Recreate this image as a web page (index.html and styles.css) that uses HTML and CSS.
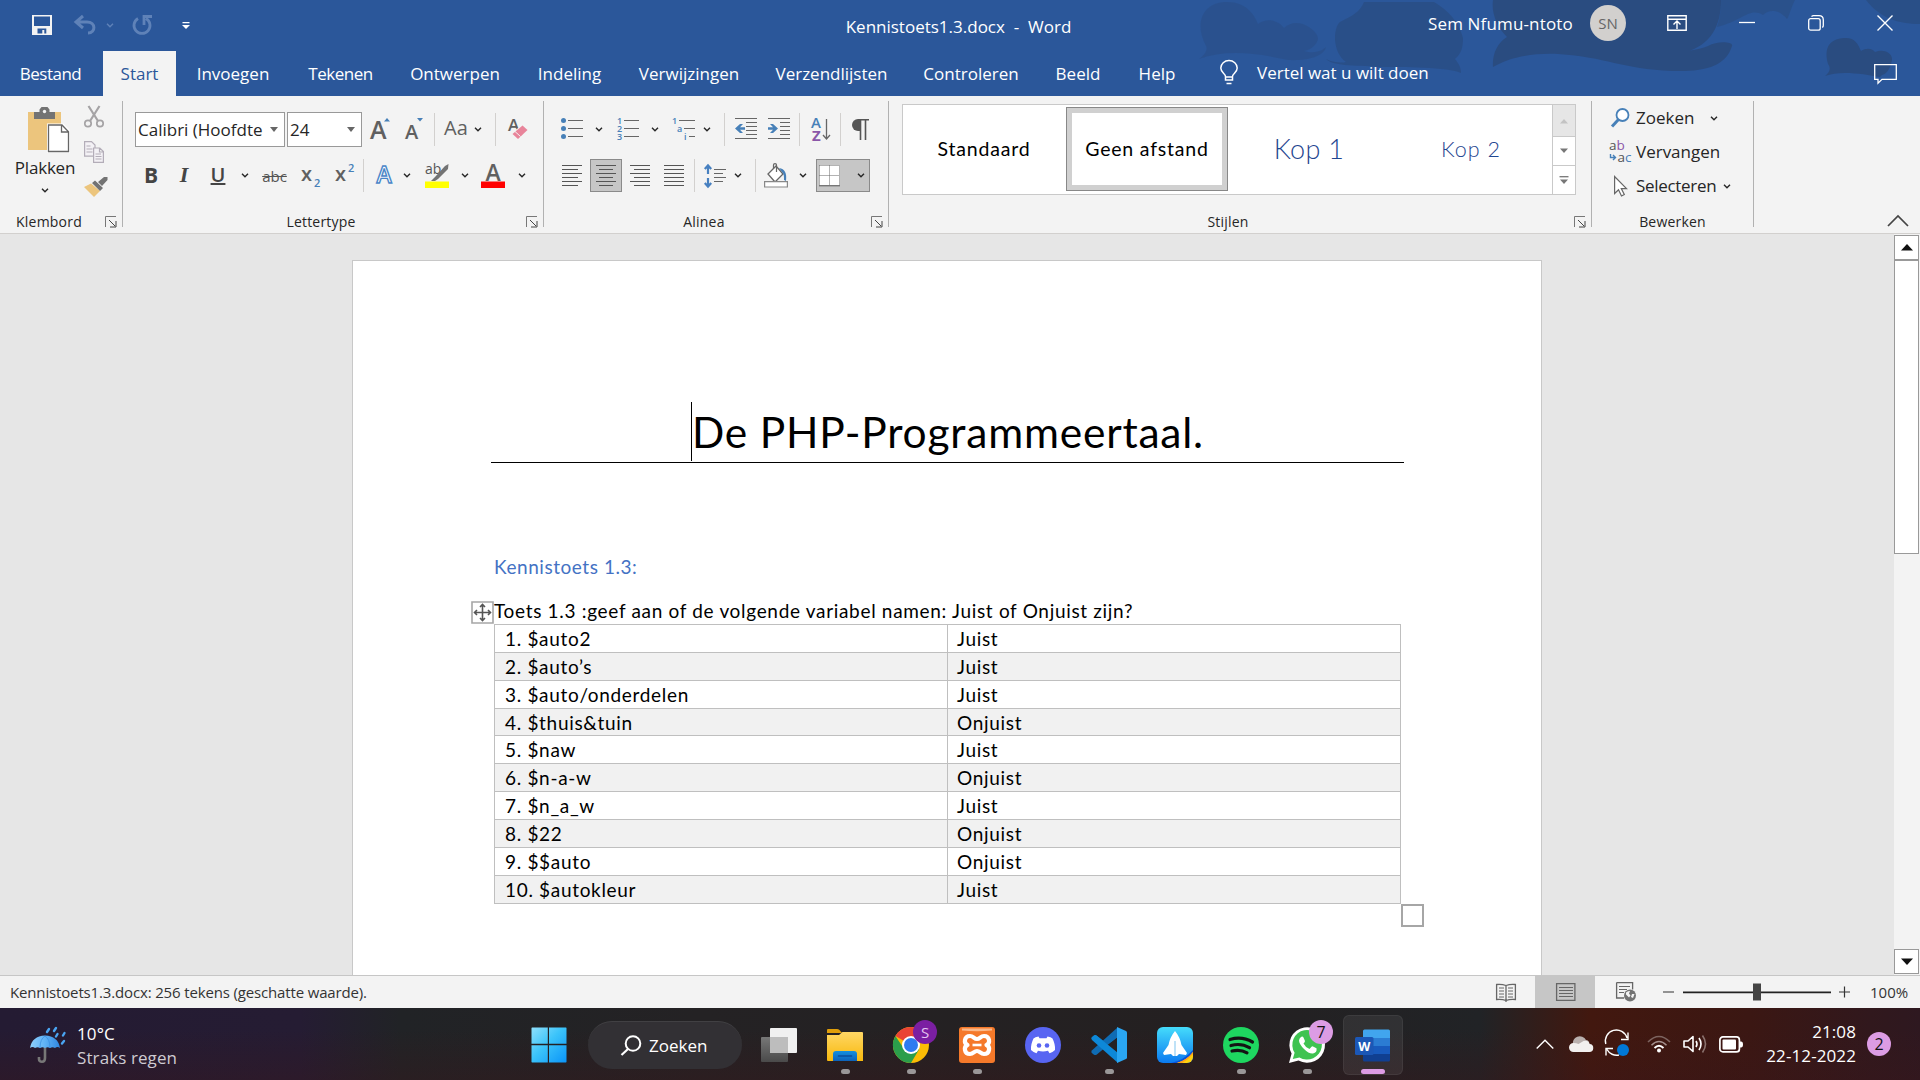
FILE: index.html
```html
<!DOCTYPE html>
<html lang="nl">
<head>
<meta charset="utf-8">
<title>Kennistoets1.3.docx - Word</title>
<link rel="stylesheet" href="styles.css">
</head>
<body>
<svg class="defs" aria-hidden="true">
  <symbol id="chev" viewBox="0 0 8 5"><path d="M1 .7l3 3 3-3" fill="none" stroke="currentColor" stroke-width="1.4"/></symbol>
  <symbol id="launch" viewBox="0 0 12 12"><path d="M.5 11V.5H11" fill="none" stroke="#777"/><path d="M4 4l6 6M11 5v6H5" fill="none" stroke="#444"/></symbol>
</svg>
<div class="app">
  <header class="head">
    <svg class="art" viewBox="0 0 740 96" width="740" height="96">
      <g fill="#2a4c80">
        <path opacity=".45" d="M19 59c6-4 9-10 7-13C14 24 22 2 47 2c20 0 28 14 31 22 10-8 22-2 26 4 12-12 32 0 34 10 0 5-6 12-14 13 10 3 18 0 22-4-2 10-20 14-38 13-36-8-64-10-89-1z"/>
        <path opacity=".7" d="M146 59c8 4 16 4 20 3-14-10-13-34-6-40 12-6 20-10 24-20h70c14 8 25 20 29 36 0 10-2 16-8 21 5 6 6 10 6 14-12-6-60-6-80-6-30-2-48-1-55-8z"/>
        <path d="M313 67c-1-12 4-24 14-30-10-10-16-24-14-37h228c0 20-6 42-32 51-14 4-26 3-35 1 22 1 42-1 54-6 10-6 26-4 24 0-6 20-26 26-60 25-50-2-66-14-114-17-30-1-50 4-65 13z"/>
        <path d="M645 76c5-4 6-8 3-12-6-22 8-26 18-26 9 0 12 6 15 13 6-4 12-2 14 1 10-4 18 2 17 8-2 10-6 14-10 15l-2 2c-16-3-40-7-55-1z"/>
        <path opacity=".55" d="M541 0h74c-5 10-6 17-8 19-8-10-18-10-24-4-14-8-20 6-46 12 3-8 4-18 4-27z"/>
        <path opacity=".75" d="M686 0h54v24c-22 0-40-6-54-24z"/>
      </g>
    </svg>
    <div class="titlebar">
      <div class="qat">
        <svg class="save" width="20" height="20" viewBox="0 0 20 20"><path d="M0 0h20v20H0z" fill="#f3f3f3"/><path d="M2 1.5h16V11H2zM5.5 13.5h8.800V18.500h-2v-3.500h-2v3.500H5.500z" fill="#2b579a"/></svg>
        <svg class="undo" width="22" height="20" viewBox="0 0 22 20"><path d="M9 1L2 7l7 6M2.500 7H13c9 0 9 11 1 11" fill="none" stroke="#5f82b8" stroke-width="3"/></svg>
        <svg class="undo-chev" width="8" height="5"><use href="#chev"/></svg>
        <svg class="redo" width="20" height="20" viewBox="0 0 20 20"><path d="M6 3.500a8 8 0 1 0 8 0M12 10V1.500H20" fill="none" stroke="#5f82b8" stroke-width="2.800"/></svg>
        <svg class="more" width="8" height="7" viewBox="0 0 8 7"><path d="M.5 0h7v1.300h-7zM0 3h8L4 7z" fill="#fff"/></svg>
      </div>
      <div class="doc-name">Kennistoets1.3.docx&nbsp; -&nbsp; Word</div>
      <div class="win">
        <span class="user">Sem Nfumu-ntoto</span>
        <span class="avatar">SN</span>
        <svg class="w1" width="20" height="16" viewBox="0 0 20 16"><path d="M.8.8h18.400v14.400H.8zM.8 4.200h18.400M10 14V6.500M6.500 9.500L10 6l3.500 3.500" fill="none" stroke="#fff" stroke-width="1.400"/></svg>
        <svg class="w2" width="16" height="16" viewBox="0 0 16 16"><path d="M0 7.500h16" stroke="#fff" stroke-width="1.300"/></svg>
        <svg class="w3" width="16" height="16" viewBox="0 0 16 16"><rect x=".7" y="3.700" width="11.500" height="11.500" rx="2" fill="none" stroke="#fff" stroke-width="1.300"/><path d="M3.500 1.500q1-.8 2-.8h5.500q4.300 0 4.300 4.300v5.500q0 1.200-1 2" fill="none" stroke="#fff" stroke-width="1.300"/></svg>
        <svg class="w4" width="16" height="16" viewBox="0 0 16 16"><path d="M.5.5l15 15M15.500.5l-15 15" stroke="#fff" stroke-width="1.400"/></svg>
      </div>
    </div>
    <nav class="tabs">
      <span class="tab tight">Bestand</span>
      <span class="tab on">Start</span>
      <span class="tab">Invoegen</span>
      <span class="tab tight">Tekenen</span>
      <span class="tab">Ontwerpen</span>
      <span class="tab">Indeling</span>
      <span class="tab">Verwijzingen</span>
      <span class="tab">Verzendlijsten</span>
      <span class="tab">Controleren</span>
      <span class="tab">Beeld</span>
      <span class="tab">Help</span>
      <span class="tell"><svg width="18" height="25" viewBox="0 0 18 25"><path d="M5.500 16.500c0-3-4.700-4-4.700-8.500a8.200 7.500 0 0 1 16.400 0c0 4.500-4.700 5.500-4.700 8.500v3.500h-7zM5.500 17h7M6.500 23.500h5" fill="none" stroke="#fff" stroke-width="1.500"/></svg><span>Vertel wat u wilt doen</span></span>
      <svg class="comment" width="23" height="20" viewBox="0 0 23 20"><path d="M.7.7h21.600v14.600H8l-4 4v-4H.7z" fill="none" stroke="#fff" stroke-width="1.300"/></svg>
    </nav>
  </header>

  <section class="ribbon">
    <div class="group klembord">
      <div class="clip">
        <div class="paste">
          <svg width="42" height="46" viewBox="0 0 42 46"><path d="M0 5h33v38H0z" fill="#ecc57d"/><path d="M6 5h5.500V2.500L13.500 0h6l2 2.500V5H27v7H6z" fill="#737373"/><circle cx="16.500" cy="4.500" r="1.700" fill="#f3f3f3"/><path d="M19 16.500h16.500l6.500 7V46H19z" fill="#fff"/><path d="M20.500 18h13.500l6.500 6.800V44.500h-20zM33.500 18v7h7" fill="#fff" stroke="#666" stroke-width="1.300"/></svg>
          <span>Plakken</span>
          <svg width="8" height="5"><use href="#chev"/></svg>
        </div>
        <div class="clip-side">
          <svg width="20" height="22" viewBox="0 0 20 22"><path d="M4.500 0l9.500 15M15.500 0L6 15" stroke="#a5a3a5" stroke-width="2.200"/><circle cx="4" cy="17.500" r="3.200" fill="none" stroke="#a5a3a5" stroke-width="1.700"/><circle cx="16" cy="17.500" r="3.200" fill="none" stroke="#a5a3a5" stroke-width="1.700"/></svg>
          <svg width="20" height="22" viewBox="0 0 20 22"><path d="M.6.6h6.900l3.500 3.500v11H.6zM2.500 5h4M2.500 8h6M2.500 11h6" fill="#f3f1f5" stroke="#b3adb8" stroke-width="1.200"/><path d="M9.600 7h6.200l3.600 3.600v10.800H9.600zM15.500 7v4h4M11.500 13h5.500M11.500 15.500h6M11.500 18h6" fill="#f3f1f5" stroke="#b3adb8" stroke-width="1.200"/></svg>
          <svg class="brush" width="24" height="20" viewBox="0 0 24 20"><path d="M0 10l7-3.500L16 14l-6 6z" fill="#ecc57d"/><path d="M8 6l3-2.500 8 7.500-3 3zM14 5l6-5h3.500v3L18 9z" fill="#737373"/></svg>
        </div>
      </div>
      <div class="foot"><span class="lbl">Klembord</span><svg class="la" width="12" height="12"><use href="#launch"/></svg></div>
    </div>
    <i class="div"></i>

    <div class="group lettertype">
      <div class="row r1">
        <div class="combo cf"><span>Calibri (Hoofdte</span><i class="tri"></i></div>
        <div class="combo cs"><span>24</span><i class="tri"></i></div>
        <div class="b" style="width:38px"><svg width="22" height="24" viewBox="0 0 22 24"><text x="0" y="21.500" class="gl" font-size="25">A</text><path d="M14 4.500h6L17 1z" fill="#4780b8"/></svg></div>
        <div class="b" style="width:28px"><svg width="20" height="24" viewBox="0 0 20 24"><text x="1" y="21.500" class="gl" font-size="20">A</text><path d="M13 1h6l-3 3.500z" fill="#4780b8"/></svg></div>
        <i class="sep" style="width:13px"></i>
        <div class="b" style="width:30px"><span class="aa">Aa</span></div>
        <div class="b" style="width:14px"><svg width="8" height="5"><use href="#chev"/></svg></div>
        <i class="sep" style="width:20px"></i>
        <div class="b" style="width:25px"><svg width="20" height="24" viewBox="0 0 20 24"><text x="0" y="14" class="gl" font-size="17">A</text><path d="M3 16.500L14 8l6 5-11 10-6-4z" fill="#f3f3f3"/><path d="M4.500 17L14.500 8.500 19.500 13 10 22z" fill="#e8849a"/><path d="M7 14.500l5.500 5" stroke="#f3f3f3"/></svg></div>
      </div>
      <div class="row r2">
        <div class="b gb" style="width:26px">B</div>
        <div class="b gi" style="width:40px">I</div>
        <div class="b gu" style="width:28px">U</div>
        <div class="b" style="width:26px"><svg width="8" height="5"><use href="#chev"/></svg></div>
        <div class="b" style="width:33px"><span class="strike">abc</span></div>
        <div class="b" style="width:40px"><svg width="20" height="26" viewBox="0 0 20 26"><text x="0" y="18" class="gl" font-size="20">x</text><text x="13" y="24" class="blue" font-size="11">2</text></svg></div>
        <div class="b" style="width:28px"><svg width="20" height="26" viewBox="0 0 20 26"><text x="0" y="18" class="gl" font-size="20">x</text><text x="13" y="9" class="blue" font-size="11">2</text></svg></div>
        <i class="sep" style="width:8px"></i>
        <div class="b" style="width:33px"><svg width="20" height="24" viewBox="0 0 20 24"><text x="10" y="19" text-anchor="middle" class="fx" font-size="23">A</text></svg></div>
        <div class="b" style="width:14px"><svg width="8" height="5"><use href="#chev"/></svg></div>
        <div class="b" style="width:46px"><svg width="24" height="25" viewBox="0 0 24 25"><text x="0" y="11" class="gn" font-size="14">ab</text><path d="M6 18l4-4L20 3l3.500-2-.5 5-10 10-3 2z" fill="#737373"/><path d="M0 18.500h24v6.500H0z" fill="#ff0"/></svg></div>
        <div class="b" style="width:10px"><svg width="8" height="5"><use href="#chev"/></svg></div>
        <div class="b" style="width:46px"><svg width="24" height="25" viewBox="0 0 24 25"><text x="12" y="18" text-anchor="middle" class="gl" font-size="23">A</text><path d="M0 18.500h24v6.500H0z" fill="#f00"/></svg></div>
        <div class="b" style="width:11px"><svg width="8" height="5"><use href="#chev"/></svg></div>
      </div>
      <div class="foot"><span class="lbl">Lettertype</span><svg class="la" width="12" height="12"><use href="#launch"/></svg></div>
    </div>
    <i class="div"></i>

    <div class="group alinea">
      <div class="row r1">
        <div class="b" style="width:27px"><svg width="22" height="22" viewBox="0 0 22 22"><g fill="#4780b8"><circle cx="2.500" cy="2.500" r="2.500"/><circle cx="2.500" cy="10.500" r="2.500"/><circle cx="2.500" cy="18.500" r="2.500"/></g><path d="M7 2.500h15M7 10.500h15M7 18.500h15" stroke="#666"/></svg></div>
        <div class="b" style="width:28px"><svg width="8" height="5"><use href="#chev"/></svg></div>
        <div class="b" style="width:30px"><svg width="22" height="24" viewBox="0 0 22 24"><g class="blue" font-size="9"><text x="0" y="7">1</text><text x="0" y="15">2</text><text x="0" y="23">3</text></g><path d="M7 3.500h15M7 11.500h15M7 19.500h15" stroke="#666"/></svg></div>
        <div class="b" style="width:24px"><svg width="8" height="5"><use href="#chev"/></svg></div>
        <div class="b" style="width:33px"><svg width="23" height="24" viewBox="0 0 23 24"><g class="blue" font-size="9"><text x="0" y="7">1</text><text x="5" y="15">a</text><text x="12" y="23">i</text></g><path d="M7 3.500h16M12 11.500h11M17 19.500h6" stroke="#666"/></svg></div>
        <div class="b" style="width:14px"><svg width="8" height="5"><use href="#chev"/></svg></div>
        <i class="sep" style="width:20px"></i>
        <div class="b" style="width:23px"><svg width="22" height="22" viewBox="0 0 22 22"><path d="M0 .5h22M11 4.500h11M11 8.500h11M11 12.500h11M11 16.500h11M0 20.500h22" stroke="#666"/><path d="M0 10.500L5 6h3L5 9.300h5v2.500H5L8 15H5z" fill="#4780b8"/></svg></div>
        <div class="b indent" style="width:24px"><svg width="22" height="22" viewBox="0 0 22 22"><path d="M0 .5h22M12 4.500h10M12 8.500h10M12 12.500h10M12 16.500h10M0 20.500h22" stroke="#666"/><path d="M10 10.500L5 6H2l3 3.300H0v2.500h5L2 15h3z" fill="#4780b8"/></svg></div>
        <i class="sep" style="width:17px"></i>
        <div class="b" style="width:25px"><svg width="20" height="26" viewBox="0 0 20 26"><text x="0" y="12" class="blue" font-weight="700" font-size="15">A</text><text x="1" y="25" fill="#8a56a8" font-weight="700" font-size="15">Z</text><path d="M15.500 3v20M12 19l3.500 4 3.500-4" fill="none" stroke="#666" stroke-width="1.300"/></svg></div>
        <i class="sep" style="width:14px"></i>
        <div class="b" style="width:26px"><svg width="17" height="21" viewBox="0 0 17 21"><path d="M17 .7H7.500M8.500 1v20M13.500 1v20" fill="none" stroke="#555" stroke-width="1.600"/><path d="M9 0H6a6 6 0 0 0 0 12h3z" fill="#555"/></svg></div>
      </div>
      <div class="row r2">
        <div class="b" style="width:28px"><svg width="20" height="22" viewBox="0 0 20 22"><path d="M0 .5h20M0 4.500h16M0 8.500h20M0 12.500h16M0 16.500h20M0 20.500h16" stroke="#555"/></svg></div>
        <div class="b sel al" style="width:32px"><svg width="20" height="22" viewBox="0 0 20 22"><path d="M0 .5h20M3 4.500h14M0 8.500h20M3 12.500h14M0 16.500h20M3 20.500h14" stroke="#555"/></svg></div>
        <div class="b" style="width:36px"><svg width="20" height="22" viewBox="0 0 20 22"><path d="M0 .5h20M4 4.500h16M0 8.500h20M4 12.500h16M0 16.500h20M4 20.500h16" stroke="#555"/></svg></div>
        <div class="b" style="width:32px"><svg width="20" height="22" viewBox="0 0 20 22"><path d="M0 .5h20M0 4.500h20M0 8.500h20M0 12.500h20M0 16.500h20M0 20.500h20" stroke="#555"/></svg></div>
        <i class="sep" style="width:8px"></i>
        <div class="b" style="width:34px"><svg width="22" height="24" viewBox="0 0 22 24"><path d="M4 2v8M4 14v8M.8 5L4 1.500 7.200 5M.8 19L4 22.500 7.200 19" fill="none" stroke="#4780c0" stroke-width="2.200"/><path d="M10 5.500h12M10 9.500h9M10 13.500h12M10 17.500h9" stroke="#666"/></svg></div>
        <div class="b" style="width:12px"><svg width="8" height="5"><use href="#chev"/></svg></div>
        <i class="sep" style="width:22px"></i>
        <div class="b" style="width:20px"><svg width="24" height="25" viewBox="0 0 24 25"><path d="M4 11l8-8 7 8-8 8z" fill="#fff" stroke="#666" stroke-width="1.300"/><path d="M9.500 6V2q0-1.400 1.500-1.400T12.500 2v7" fill="none" stroke="#666" stroke-width="1.200"/><path d="M15 5c6 1 8 5 7 13l-2-1c0-4 0-6-2-8z" fill="#4780b8"/><path d="M.6 18.600h22.800v5.400H.6z" fill="#fff" stroke="#888" stroke-width="1.200"/></svg></div>
        <div class="b bucket-chev" style="width:30px"><svg width="8" height="5"><use href="#chev"/></svg></div>
        <div class="b sel bord"><svg width="21" height="22" viewBox="0 0 21 22"><path d="M0 0h21v21H0z" fill="#fff"/><path d="M.5.5h20M.5.5v20M20.500.5v20M10.500.5v20M.5 10.500h20" fill="none" stroke="#666" stroke-dasharray="1 1"/><path d="M0 20.700h21" stroke="#777" stroke-width="1.400"/></svg><svg width="8" height="5"><use href="#chev"/></svg></div>
      </div>
      <div class="foot"><span class="lbl">Alinea</span><svg class="la" width="12" height="12"><use href="#launch"/></svg></div>
    </div>
    <i class="div"></i>

    <div class="group stijlen">
      <div class="gallery">
        <div class="style">Standaard</div>
        <div class="style cur">Geen afstand</div>
        <div class="style k1">Kop 1</div>
        <div class="style k2">Kop 2</div>
        <div class="gscroll"><i class="off"><svg width="10" height="6" viewBox="0 0 10 6"><path d="M1 5.500h8L5 1z" fill="#c3c3c3"/></svg></i><i><svg width="10" height="6" viewBox="0 0 10 6"><path d="M1 .5h8L5 5z" fill="#777"/></svg></i><i><svg width="10" height="9" viewBox="0 0 10 9"><path d="M.5.7h9" stroke="#777" stroke-width="1.300"/><path d="M1 3.500h8L5 8z" fill="#777"/></svg></i></div>
      </div>
      <div class="foot"><span class="lbl">Stijlen</span><svg class="la" width="12" height="12"><use href="#launch"/></svg></div>
    </div>
    <i class="div"></i>

    <div class="group bewerken">
      <div class="edit"><svg width="25" height="20" viewBox="0 0 25 20"><circle cx="13.500" cy="7" r="6" fill="#fff" stroke="#4780b8" stroke-width="1.800"/><path d="M9.500 11.500L3 18.500" stroke="#4780b8" stroke-width="3"/></svg><span class="t">Zoeken</span><svg class="ec1" width="8" height="5"><use href="#chev"/></svg></div>
      <div class="edit"><svg width="25" height="24" viewBox="0 0 25 24"><text x="0" y="10" class="gn" font-size="13.500">a<tspan fill="#8a56a8">b</tspan></text><text x="8.500" y="21.500" class="gn" font-size="13.500">a<tspan fill="#4780b8">c</tspan></text><path d="M1.500 14v3.500H6M4 15l2.500 2.500L4 20" fill="none" stroke="#4780b8" stroke-width="1.400"/></svg><span class="t">Vervangen</span></div>
      <div class="edit"><svg width="25" height="22" viewBox="0 0 25 22"><path d="M5.600 1.500v17l3.900-3.700 3 6.200 2.800-1.400-3-6h5.200z" fill="#fff" stroke="#666" stroke-width="1.200"/></svg><span class="t narrow">Selecteren</span><svg class="ec2" width="8" height="5"><use href="#chev"/></svg></div>
      <div class="foot"><span class="lbl">Bewerken</span></div>
    </div>
    <i class="div"></i>
    <svg class="collapse" width="22" height="12" viewBox="0 0 22 12"><path d="M1 11L11 1l10 10" fill="none" stroke="#444" stroke-width="1.700"/></svg>
  </section>

  <main class="work">
    <article class="page">
      <h1><span>De PHP-Programmeertaal.</span></h1>
      <h2>Kennistoets 1.3:</h2>
      <div class="q"><svg class="move" width="23" height="23" viewBox="0 0 23 23"><path d="M1 1h21v21H1z" fill="#fff" stroke="#a6a6a6" stroke-width="1.600"/><path d="M11.500 4v15M4 11.500h15M9 6l2.500-2.500L14 6M9 17l2.500 2.500L14 17M6 9l-2.500 2.500L6 14M17 9l2.500 2.500L17 14" fill="none" stroke="#555" stroke-width="1.600"/></svg>Toets 1.3 :geef aan of de volgende variabel namen: Juist of Onjuist zijn?</div>
      <div class="answers">
        <div class="tr"><span>1. $auto2</span><span>Juist</span></div>
        <div class="tr"><span>2. $auto’s</span><span>Juist</span></div>
        <div class="tr"><span>3. $auto/onderdelen</span><span>Juist</span></div>
        <div class="tr short"><span>4. $thuis&amp;tuin</span><span>Onjuist</span></div>
        <div class="tr"><span>5. $naw</span><span>Juist</span></div>
        <div class="tr"><span>6. $n-a-w</span><span>Onjuist</span></div>
        <div class="tr"><span>7. $n_a_w</span><span>Juist</span></div>
        <div class="tr"><span>8. $22</span><span>Onjuist</span></div>
        <div class="tr"><span>9. $$auto</span><span>Onjuist</span></div>
        <div class="tr"><span>10. $autokleur</span><span>Juist</span></div>
        <i class="grip"></i>
      </div>
    </article>
    <div class="scroll">
      <i class="sb"><svg width="12" height="7" viewBox="0 0 12 7"><path d="M0 6.500h12L6 0z" fill="#111"/></svg></i>
      <i class="thumb"></i>
      <i class="sb end"><svg width="12" height="7" viewBox="0 0 12 7"><path d="M0 .5h12L6 7z" fill="#111"/></svg></i>
    </div>
  </main>

  <footer class="status">
    <span class="count-text">Kennistoets1.3.docx: 256 tekens (geschatte waarde).</span>
    <div class="views">
      <i class="v"><svg width="20" height="19" viewBox="0 0 20 19"><path d="M10 2.500Q6 1 .6 1.500v15Q6 16 10 17.500q4-1.500 9.400-1v-15Q14 1 10 2.500V19" fill="none" stroke="#666" stroke-width="1.300"/><path d="M3 5h5M3 8h5M3 11h5M3 14h5M12 5h5M12 8h5M12 11h5M12 14h5" stroke="#666"/></svg></i>
      <i class="v on"><svg width="20" height="18" viewBox="0 0 20 18"><path d="M.6.600h18.300v16.800H.6z" fill="none" stroke="#666" stroke-width="1.300"/><path d="M3 4.500h14M3 7.500h14M3 10.500h14M3 13.500h14" stroke="#666"/></svg></i>
      <i class="v"><svg width="20" height="20" viewBox="0 0 20 20"><path d="M.6.600h16v7M.6.600v15.400H8" fill="none" stroke="#666" stroke-width="1.300"/><path d="M3 4.500h11M3 7.500h8M3 10.500h5" stroke="#666"/><circle cx="14" cy="13.500" r="6" fill="#737373"/><path d="M10 10.500q2-2 4-1.500l-1 2.500 1.500 2-1.500 2-3-3zM16 12l2.500 0-1.500 4-2-1z" fill="#f3f3f3"/></svg></i>
    </div>
    <svg class="zoom" width="190" height="18" viewBox="0 0 190 18"><path d="M1 9h11M177 9h11M182.500 3.500v11" stroke="#333" stroke-width="1.200"/><path d="M21 9.300h148" stroke="#222" stroke-width="1.700"/><path d="M91 .5h8v17h-8z" fill="#444"/></svg>
    <span class="pct">100%</span>
  </footer>

  <div class="taskbar">
    <div class="weather">
      <svg width="36" height="38" viewBox="0 0 36 38"><defs><linearGradient id="um" x1="0" x2="1"><stop offset="0" stop-color="#8fd0fb"/><stop offset=".5" stop-color="#5fb2f5"/><stop offset="1" stop-color="#2f86e0"/></linearGradient></defs><path d="M15 21v11q0 3.800-3 3.800T9 33v-2" fill="none" stroke="#777" stroke-width="2.600"/><path d="M0 22Q2 10 15 9.500 28 10 30 22q-2.500-1.800-5 0-2.500-1.500-5 0-2.500-1.500-5 0-2.500-1.500-5 0-2.500-1.500-5 0-2.500-1.800-5 0z" fill="url(#um)"/><path d="M10 22q0-9 5-12 5 3 5 12" fill="none" stroke="#3a8fe0" stroke-width=".8"/><path d="M17 6l2-3M24 5l2-3M26 10.500l1.500-2.500M33 9.500l1.500-2.500M32 17.500l2-2.500" stroke="#4aa5f2" stroke-width="2.400" stroke-linecap="round"/></svg>
      <div class="wt"><span>10°C</span><span class="dim">Straks regen</span></div>
    </div>
    <div class="dock">
      <div class="slot start"><svg width="36" height="36" viewBox="0 0 36 36"><defs><linearGradient id="wi" x1="0" y1="0" x2="1" y2="1"><stop offset="0" stop-color="#8fe0fc"/><stop offset=".45" stop-color="#3cc4fa"/><stop offset="1" stop-color="#0a94f8"/></linearGradient></defs><path d="M1 .5h15.800v16.300H.5V1zM18 .5h17l.5.500v15.800H18zM.5 18.200h16.300v17.300H1l-.5-.500zM18 18.200h17.500V35l-.5.500H18z" fill="url(#wi)"/></svg></div>
      <div class="search"><svg width="22" height="22" viewBox="0 0 22 22"><circle cx="13" cy="8.500" r="7.300" fill="none" stroke="#fff" stroke-width="2"/><path d="M8 14l-6.500 6" stroke="#fff" stroke-width="2.200"/></svg><span>Zoeken</span></div>
      <div class="slot"><svg width="36" height="36" viewBox="0 0 36 36"><defs><linearGradient id="tv" x1="0" y1="0" x2="0" y2="1"><stop offset="0" stop-color="#777"/><stop offset="1" stop-color="#4a4a4a"/></linearGradient></defs><rect x="0" y="10" width="27" height="25" rx="1" fill="url(#tv)"/><rect x="9" y="1" width="27" height="25" rx="1" fill="#f0f0f0"/><path d="M9 10h18v16H9z" fill="#bdbdbd"/></svg></div>
      <div class="slot run"><svg width="36" height="36" viewBox="0 0 36 36"><defs><linearGradient id="fo" x1="0" y1="0" x2="0" y2="1"><stop offset="0" stop-color="#ffd765"/><stop offset="1" stop-color="#f8b90d"/></linearGradient><linearGradient id="fb" x1="0" y1="0" x2="0" y2="1"><stop offset="0" stop-color="#1490df"/><stop offset="1" stop-color="#0d62ba"/></linearGradient></defs><path d="M0 3q0-1 1-1h9q1.500 0 2.500 1L15 6H0z" fill="#e09e0a"/><path d="M0 8h12l3.500-3H35q1 0 1 1v28H1q-1 0-1-1z" fill="url(#fo)"/><path d="M6 34V27q0-3 3-3h18q3 0 3 3v7z" fill="url(#fb)"/><path d="M11.500 29h13" stroke="#0b4f9c" stroke-width="1.600" stroke-linecap="round"/></svg></div>
      <div class="slot run"><svg width="36" height="36" viewBox="0 0 36 36"><circle cx="18" cy="18" r="18" fill="#fbbc05"/><path d="M18 18L2.400 9A18 18 0 0 1 33.600 9L34 10H18z" fill="#ea4335"/><path d="M18 18l-6.900 4L2.400 9A18 18 0 0 0 18 36l8-13.500z" fill="#2b9e4b"/><circle cx="18" cy="18" r="9" fill="#fff"/><circle cx="18" cy="18" r="7" fill="#2f7bf0"/></svg><span class="badge ps">S</span></div>
      <div class="slot run"><svg width="36" height="36" viewBox="0 0 36 36"><rect width="36" height="36" rx="3" fill="#f5792a"/><path d="M3 1.500h30v2q-15 1.500-30 0z" fill="#fbb98a"/><path d="M11 9c3.500 0 4 3 7 3s3.500-3 7-3c6 0 6.500 7.500 2.500 9 4 1.500 3.500 9-2.500 9-3.500 0-4-3-7-3s-3.500 3-7 3c-6 0-6.500-7.500-2.500-9C4.500 16.500 5 9 11 9z" fill="none" stroke="#fff" stroke-width="4.200" stroke-linejoin="round"/><path d="M13.500 18h9" stroke="#fff" stroke-width="2.600"/></svg></div>
      <div class="slot"><svg width="36" height="36" viewBox="0 0 36 36"><circle cx="18" cy="18" r="18" fill="#5865f2"/><path d="M13.500 9.500l1 1.700h7l1-1.700q3.500.5 5 2 3 6 2.500 11.500-2.500 2.500-5.500 3.200l-1.500-2.400q-5 1.600-10 0l-1.500 2.400Q8.500 25.500 6 23q-.5-5.500 2.500-11.500 1.500-1.500 5-2z" fill="#fff"/><circle cx="14" cy="18.500" r="2.300" fill="#5865f2"/><circle cx="22" cy="18.500" r="2.300" fill="#5865f2"/></svg></div>
      <div class="slot run"><svg width="36" height="36" viewBox="0 0 36 36"><path d="M26 9.500v17L1 12.500q-1-1.500 0-2.500l2-1.500q1.300-.8 2.500 0L27 25.500z" fill="#0a7fce"/><path d="M26 1L.8 23.500q-1 1.500 0 2.500L3 27.700q1.300.7 2.500 0L27 10z" fill="#0f6cb4"/><path d="M26 11v15L16.500 18z" fill="#242124"/><path d="M.8 10.500L3 8.500q1.300-.8 2.500 0L27 26v10L1 13q-1-1.500-.2-2.500z" fill="#0d88d8"/><path d="M26 0l9 4q1 .5 1 1.500v25q0 1-1 1.500l-9 4z" fill="#2aa6f2"/></svg></div>
      <div class="slot"><svg width="36" height="36" viewBox="0 0 36 36"><defs><linearGradient id="sp" x1="0" y1="0" x2="0" y2="1"><stop offset="0" stop-color="#45dcfb"/><stop offset="1" stop-color="#0b7af0"/></linearGradient><clipPath id="spc"><rect width="36" height="36" rx="6"/></clipPath></defs><g clip-path="url(#spc)"><path d="M0 0h36v36H0z" fill="url(#sp)"/><path d="M14 36q12-2 22-13v13z" fill="#0a50d8"/><path d="M20 36q10-3 16-11v11z" fill="#ffd20c"/><path d="M20 36q10-3 16-11v2q-5 6-11 9z" fill="#ff9d1e"/></g><path d="M18 4q-5 6-6.500 14L6 26l1 2 7-1 2 2h4l2-2 7 1 1-2-5.500-8Q23 10 18 4z" fill="#fff"/><path d="M17 14h2v15h-2z" fill="#bfe2f7"/></svg></div>
      <div class="slot run"><svg width="36" height="36" viewBox="0 0 36 36"><circle cx="18" cy="18" r="18" fill="#1ed760"/><path d="M7 12.500q12-3.500 22.500 2.500M8 18.500q10-2.800 18.500 2.200M9 24q8.500-2 15 1.800" fill="none" stroke="#141414" stroke-width="3.200" stroke-linecap="round"/></svg></div>
      <div class="slot run"><svg width="36" height="36" viewBox="0 0 36 36"><path d="M0 36l2.600-9.400A17.800 17.800 0 1 1 9.500 33.500z" fill="#fff"/><path d="M3.800 32l1.800-6.300a14.800 14.800 0 1 1 4.800 4.700z" fill="#3fc351"/><path d="M12 10q1.500-1 2.500.5l1.500 3.500q0 1-1.500 2.500 2 4 6 5.500l2-2.300q.8-.6 1.500-.2l3.500 1.800q.8 4.200-3.500 5.200-4 .5-9-4.500T10 13.500q.3-2.500 2-3.500z" fill="#fff"/></svg><span class="badge">7</span></div>
      <div class="slot word"><svg width="36" height="36" viewBox="0 0 36 36"><path d="M8 4q0-1.500 1.500-1.500h24Q35 2.500 35 4v7H8z" fill="#41a5ee"/><path d="M8 11h27v8H8z" fill="#2b7cd3"/><path d="M8 19h27v8H8z" fill="#185abd"/><path d="M8 27h27v6q0 1.500-1.500 1.500h-24Q8 34.500 8 33z" fill="#103f91"/><rect x="0" y="10" width="18.500" height="18" rx="1.500" fill="#1b57b6"/><text x="9.200" y="23.500" text-anchor="middle" fill="#fff" font-weight="700" font-size="12.500">W</text></svg></div>
    </div>
    <div class="tray">
      <svg class="t1" width="18" height="10" viewBox="0 0 18 10"><path d="M.7 9.500L9 1.200l8.300 8.300" fill="none" stroke="#fff" stroke-width="1.400"/></svg>
      <svg class="t2" width="24" height="16" viewBox="0 0 24 16"><path d="M4 9a7 7 0 0 1 13-5q3 0 3.500 4z" fill="#b9b0ae"/><path d="M4.500 16a4.500 4.500 0 0 1 0-9q3 0 5 1l5-3q5-1 6 3a4 4 0 0 1-.5 8z" fill="#f2f0ef"/></svg>
      <svg class="t3" width="24" height="24" viewBox="0 0 24 24"><path d="M.8 12A11 11 0 0 1 22 6M23 .5v7h-7M14 23A11 11 0 0 1 2 17.500M1 23.500v-7h7" fill="none" stroke="#fff" stroke-width="1.400"/><circle cx="18" cy="18" r="6" fill="#0078d7"/></svg>
      <svg class="t4" width="24" height="18" viewBox="0 0 24 18"><path d="M1 7q11-11 22 0" fill="none" stroke="#7d6460" stroke-width="1.600"/><path d="M4.500 10.200q7.500-7.500 15 0" fill="none" stroke="#a48f8c" stroke-width="1.500"/><path d="M7.500 13q4.500-4.500 9 0" fill="none" stroke="#fff" stroke-width="1.900"/><circle cx="12" cy="15.500" r="2" fill="#fff"/></svg>
      <svg class="t5" width="24" height="20" viewBox="0 0 24 20"><path d="M1 7v6h4l5 4.500v-15L5 7z" fill="none" stroke="#fff" stroke-width="1.600" stroke-linejoin="round"/><path d="M13 7q2 3 0 6M16 4q4 6 0 12" fill="none" stroke="#fff" stroke-width="1.600"/><path d="M19.500 1.500q6 8.500 0 17" fill="none" stroke="#8a716d" stroke-width="1.600"/></svg>
      <svg class="t6" width="24" height="17" viewBox="0 0 24 17"><rect x=".9" y=".9" width="19.500" height="15" rx="3" fill="none" stroke="#fff" stroke-width="1.700"/><rect x="3.500" y="3.500" width="13.500" height="10" rx="1" fill="#fff"/><path d="M21 5.500h1q2 0 2 3t-2 3h-1z" fill="#fff"/></svg>
      <div class="clock"><span>21:08</span><span>22-12-2022</span></div>
      <span class="count">2</span>
    </div>
  </div>
</div>
</body>
</html>
```
FILE: styles.css
```css
* { box-sizing: border-box; }
html, body { margin: 0; width: 1920px; height: 1080px; overflow: hidden; }
body { font-family: "Open Sans", "Noto Sans", sans-serif; color: #262626; }
svg { display: block; flex: none; overflow: visible; }
i { font-style: normal; }
.defs { position: absolute; width: 0; height: 0; }
.app { display: flex; flex-direction: column; width: 1920px; height: 1080px; }

/* Title bar and tabs */
.head { position: relative; height: 96px; background: #2b579a; color: #fff; display: flex; flex-direction: column; }
.art { position: absolute; right: 0; top: 0; overflow: hidden; }
.titlebar { position: relative; height: 51px; display: grid; grid-template-columns: 600px 1fr 600px; }
.qat { display: flex; align-items: center; color: #5f82b8; padding-bottom: 1px; }
.save { margin-left: 32px; }
.undo { margin-left: 22px; }
.undo-chev { margin-left: 10px; }
.redo { margin-left: 18px; }
.more { margin-left: 30px; }
.doc-name { display: flex; align-items: center; justify-content: center; font-size: 17px; padding: 2px 3px 0 0; }
.win { display: flex; align-items: center; padding-bottom: 5px; font-size: 17px; }
.user { margin-left: 108px; width: 162px; white-space: nowrap; letter-spacing: .15px; }
.avatar { width: 36px; height: 36px; border-radius: 50%; background: #d2d0ce; color: #666; font-size: 15px; display: flex; align-items: center; justify-content: center; }
.w1 { margin-left: 41px; }
.w2 { margin-left: 52px; }
.w3 { margin-left: 53px; }
.w4 { margin-left: 53px; }
.tabs { position: relative; height: 45px; display: grid; grid-template-columns: 103px 73px 114px 101px 128px 101px 138px 147px 132px 82px 76px 1fr 46px; font-size: 17px; }
.tab { display: flex; align-items: center; justify-content: center; white-space: nowrap; }
.tab:first-child { padding-right: 2px; }
.tight { letter-spacing: -.5px; }
.tab.on { background: #f3f3f3; color: #2b579a; }
.tell { display: flex; align-items: center; gap: 19px; padding: 0 0 2px 25px; }
.comment { align-self: center; }

/* Ribbon */
.ribbon { height: 138px; background: #f3f3f3; border-bottom: 1px solid #d2d0ce; display: flex; }
.div { width: 1px; margin: 5px 0 6px; background: #b1b1b1; }
.group { display: flex; flex-direction: column; padding-top: 16px; }
.klembord { width: 122px; padding-top: 10px; }
.lettertype { width: 420px; padding-left: 12px; }
.alinea { width: 344px; padding-left: 14px; }
.stijlen { width: 702px; padding: 8px 0 0 13px; }
.bewerken { width: 161px; padding-top: 5px; }
.foot { margin-top: auto; height: 23px; display: flex; align-items: center; font-size: 14px; }
.lbl { flex: 1; text-align: center; letter-spacing: .2px; }
.lettertype .foot { margin-left: -12px; }
.alinea .foot { margin-left: -14px; }
.stijlen .foot { margin-left: -13px; }
.la { margin: 0 5px 0 7px; }
.clip { display: flex; }
.paste { width: 84px; padding: 1px 0 0 6px; display: flex; flex-direction: column; align-items: center; font-size: 17px; }
.paste span { line-height: 30px; margin: 0 0 5px; letter-spacing: -.2px; }
.paste svg:first-child { margin-left: 8px; }
.clip-side { display: flex; flex-direction: column; gap: 13px; }
.brush { margin-top: 1px; }
.row { display: flex; align-items: center; }
.r1 { height: 35px; margin-bottom: 12px; }
.r2 { height: 33px; }
.lettertype .r2 { padding-left: 3px; }
.b { display: flex; align-items: center; justify-content: center; height: 100%; flex: none; }
.r1 .b { padding-bottom: 1px; }
.sep { height: 33px; flex: none; background: linear-gradient(#d2d0ce, #d2d0ce) center / 1px 100% no-repeat; }
.combo { height: 35px; background: #fff; border: 1px solid #999; display: flex; align-items: center; justify-content: space-between; font-size: 17px; white-space: nowrap; padding: 0 6px 0 2px; }
.cf { width: 150px; }
.cs { width: 75px; margin-left: 2px; }
.tri { border: 4px solid transparent; border-top: 5px solid #666; border-bottom: 0; }
.gl { fill: #606060; font-weight: 600; }
.gn { fill: #555; }
.blue { fill: #4780b8; font-weight: 600; }
.fx { fill: #fff; stroke: #4a86c8; stroke-width: 1.4px; font-weight: 600; }
.aa { font-size: 20px; color: #606060; line-height: 30px; margin-top: -3px; }
.gb { font-weight: 700; font-size: 21px; color: #444; padding-bottom: 2px; }
.gi { font: italic 700 22px "Liberation Serif", serif; color: #444; padding-bottom: 2px; }
.gu { font-weight: 600; font-size: 20px; color: #444; text-decoration: underline; padding-bottom: 2px; }
.strike { font-size: 15px; text-decoration: line-through; color: #555; }
.indent { margin-left: 10px; }
.sel { background: #c6c6c6; border: 1px solid #8a8a8a; }
.al { margin-left: 4px; }
.bucket-chev { padding-left: 4px; }
.bord { width: 54px; gap: 17px; padding-right: 2px; }

.gallery { display: flex; width: 674px; height: 91px; background: #fff; border: 1px solid #c9c9c9; font-family: Lato, sans-serif; color: #000; }
.style { width: 162px; margin: 2px 0; padding-bottom: 2px; display: flex; align-items: center; justify-content: center; font-size: 19.5px; letter-spacing: .8px; }
.cur { border: 1px solid #888; box-shadow: inset 0 0 0 5px #d0d0d0; margin: 2px 0 3px 1px; padding-bottom: 1px; }
.k1 { font-size: 27px; letter-spacing: .3px; font-weight: 300; color: #1f4690; }
.k2 { font-size: 21.5px; letter-spacing: 1px; font-weight: 300; color: #1f4690; }
.gscroll { margin-left: auto; width: 23px; border-left: 1px solid #c9c9c9; display: grid; grid-template-rows: 31px 29px 29px; }
.gscroll i { display: flex; align-items: center; justify-content: center; }
.gscroll i + i { border-top: 1px solid #c9c9c9; }
.gscroll .off { background: #e6e6e6; }

.edit { height: 34px; padding-left: 17px; display: flex; align-items: center; font-size: 17px; }
.edit .t { margin-left: 2px; line-height: 24px; }
.edit .narrow { letter-spacing: -.3px; }
.ec1 { margin-left: 16px; }
.ec2 { margin-left: 7px; }
.collapse { margin: 119px 0 0 133px; }

/* Document */
.work { flex: 1; background: #e6e6e6; display: flex; overflow: hidden; }
.page { width: 1190px; margin: 26px 0 0 352px; background: #fff; border: 1px solid #c8c8c8; border-bottom: 0; font-family: Lato, sans-serif; color: #000; padding: 141px 0 0 138px; }
h1, h2 { margin: 0; font-weight: 400; }
h1 { width: 913px; height: 61px; border-bottom: 1px solid #000; text-align: center; font-size: 42.5px; letter-spacing: .8px; line-height: 60px; }
h1 span { border-left: 1px solid #000; display: inline-block; height: 59px; }
h2 { margin: 92px 0 0 3px; font-size: 19px; letter-spacing: .55px; line-height: 24px; color: #4472c4; }
.q { position: relative; margin: 20px 0 0 3px; font-size: 19px; letter-spacing: .68px; line-height: 24px; white-space: nowrap; }
.move { position: absolute; left: -23px; top: 2px; }
.answers { position: relative; margin: 1px 0 0 3px; width: 907px; border: 1px solid #bfbfbf; border-top: 0; font-size: 19px; letter-spacing: .68px; }
.tr { display: grid; grid-template-columns: 452px 1fr; height: 28px; border-top: 1px solid #bfbfbf; line-height: 27px; }
.tr span { padding-left: 10px; }
.tr span + span { padding-left: 9px; border-left: 1px solid #bfbfbf; }
.tr:nth-child(even) { background: #f1f1f1; }
.tr.short { height: 27px; }
.grip { position: absolute; right: -24px; bottom: -24px; width: 23px; height: 23px; background: #fff; border: 2px solid #a6a6a6; }
.scroll { width: 26px; margin-left: auto; background: #f3f3f3; padding-top: 1px; display: flex; flex-direction: column; }
.sb { width: 25px; height: 25px; background: #fff; border: 1px solid #999; display: flex; align-items: center; justify-content: center; }
.thumb { width: 25px; height: 294px; background: #fff; border: 1px solid #999; }
.end { margin-top: auto; margin-bottom: 1px; }

/* Status bar */
.status { height: 33px; background: #f3f3f3; border-top: 1px solid #c6c6c6; display: flex; align-items: center; font-size: 15px; padding: 0 10px; color: #333; }
.count-text { letter-spacing: -.15px; }
.views { margin-left: auto; display: flex; height: 100%; }
.v { width: 60px; display: flex; align-items: center; justify-content: center; padding-left: 1px; }
.v.on { background: #c6c6c6; }
.zoom { margin-left: 7px; }
.pct { width: 40px; margin-left: 18px; }

/* Taskbar */
.taskbar { height: 72px; background: linear-gradient(to top, rgba(58, 22, 26, .35), transparent 70%), linear-gradient(90deg, #241b33 0, #251c33 300px, #212326 400px, #242224 700px, #242021 1200px, #212326 1480px, #42180f 1590px, #3b1713 1750px, #31181d 1870px, #2e1820); display: flex; color: #fff; position: relative; }
.weather { width: 516px; display: flex; align-items: flex-start; padding: 18px 0 0 30px; font-size: 17px; }
.wt { display: flex; flex-direction: column; margin-left: 11px; line-height: 24px; margin-top: -4px; letter-spacing: .1px; }
.dim { color: #cfcbd2; }
.dock { display: flex; }
.slot { width: 66px; height: 72px; position: relative; display: flex; align-items: center; justify-content: center; padding-top: 2px; }
.search { width: 154px; height: 48px; margin: 13px 4px 0 6px; border-radius: 24px; background: #323034; border-top: 1px solid #414043; display: flex; align-items: center; padding-left: 32px; gap: 7px; font-size: 17px; }
.run::after { content: ""; position: absolute; left: 29px; bottom: 6px; width: 9px; height: 5px; border-radius: 3px; background: #9a9798; }
.badge { position: absolute; left: 35px; top: 12px; width: 24px; height: 24px; border-radius: 50%; background: #dc9ce4; color: #111; font-size: 16px; line-height: 24px; text-align: center; }
.ps { background: #7b1fa2; color: #e6c6f0; font-size: 15px; }
.word::before { content: ""; position: absolute; inset: 7px 3px 5px; border-radius: 6px; background: rgba(255, 255, 255, .07); border: 1px solid rgba(255, 255, 255, .06); }
.word svg { position: relative; }
.word::after { content: ""; position: absolute; left: 21px; bottom: 6px; width: 24px; height: 5px; border-radius: 3px; background: #dc9ce4; }
.tray { margin-left: auto; display: flex; align-items: center; }
.t2 { margin-left: 15px; }
.t3 { margin-left: 12px; }
.t4 { margin-left: 18px; }
.t5 { margin-left: 12px; }
.t6 { margin-left: 12px; }
.clock { width: 113px; text-align: right; font-size: 17px; letter-spacing: .1px; line-height: 24px; }
.clock span { display: block; }
.count { width: 24px; height: 24px; border-radius: 50%; background: #dc9ce4; color: #111; font-size: 16px; line-height: 24px; text-align: center; margin: 0 29px 0 11px; }
```
